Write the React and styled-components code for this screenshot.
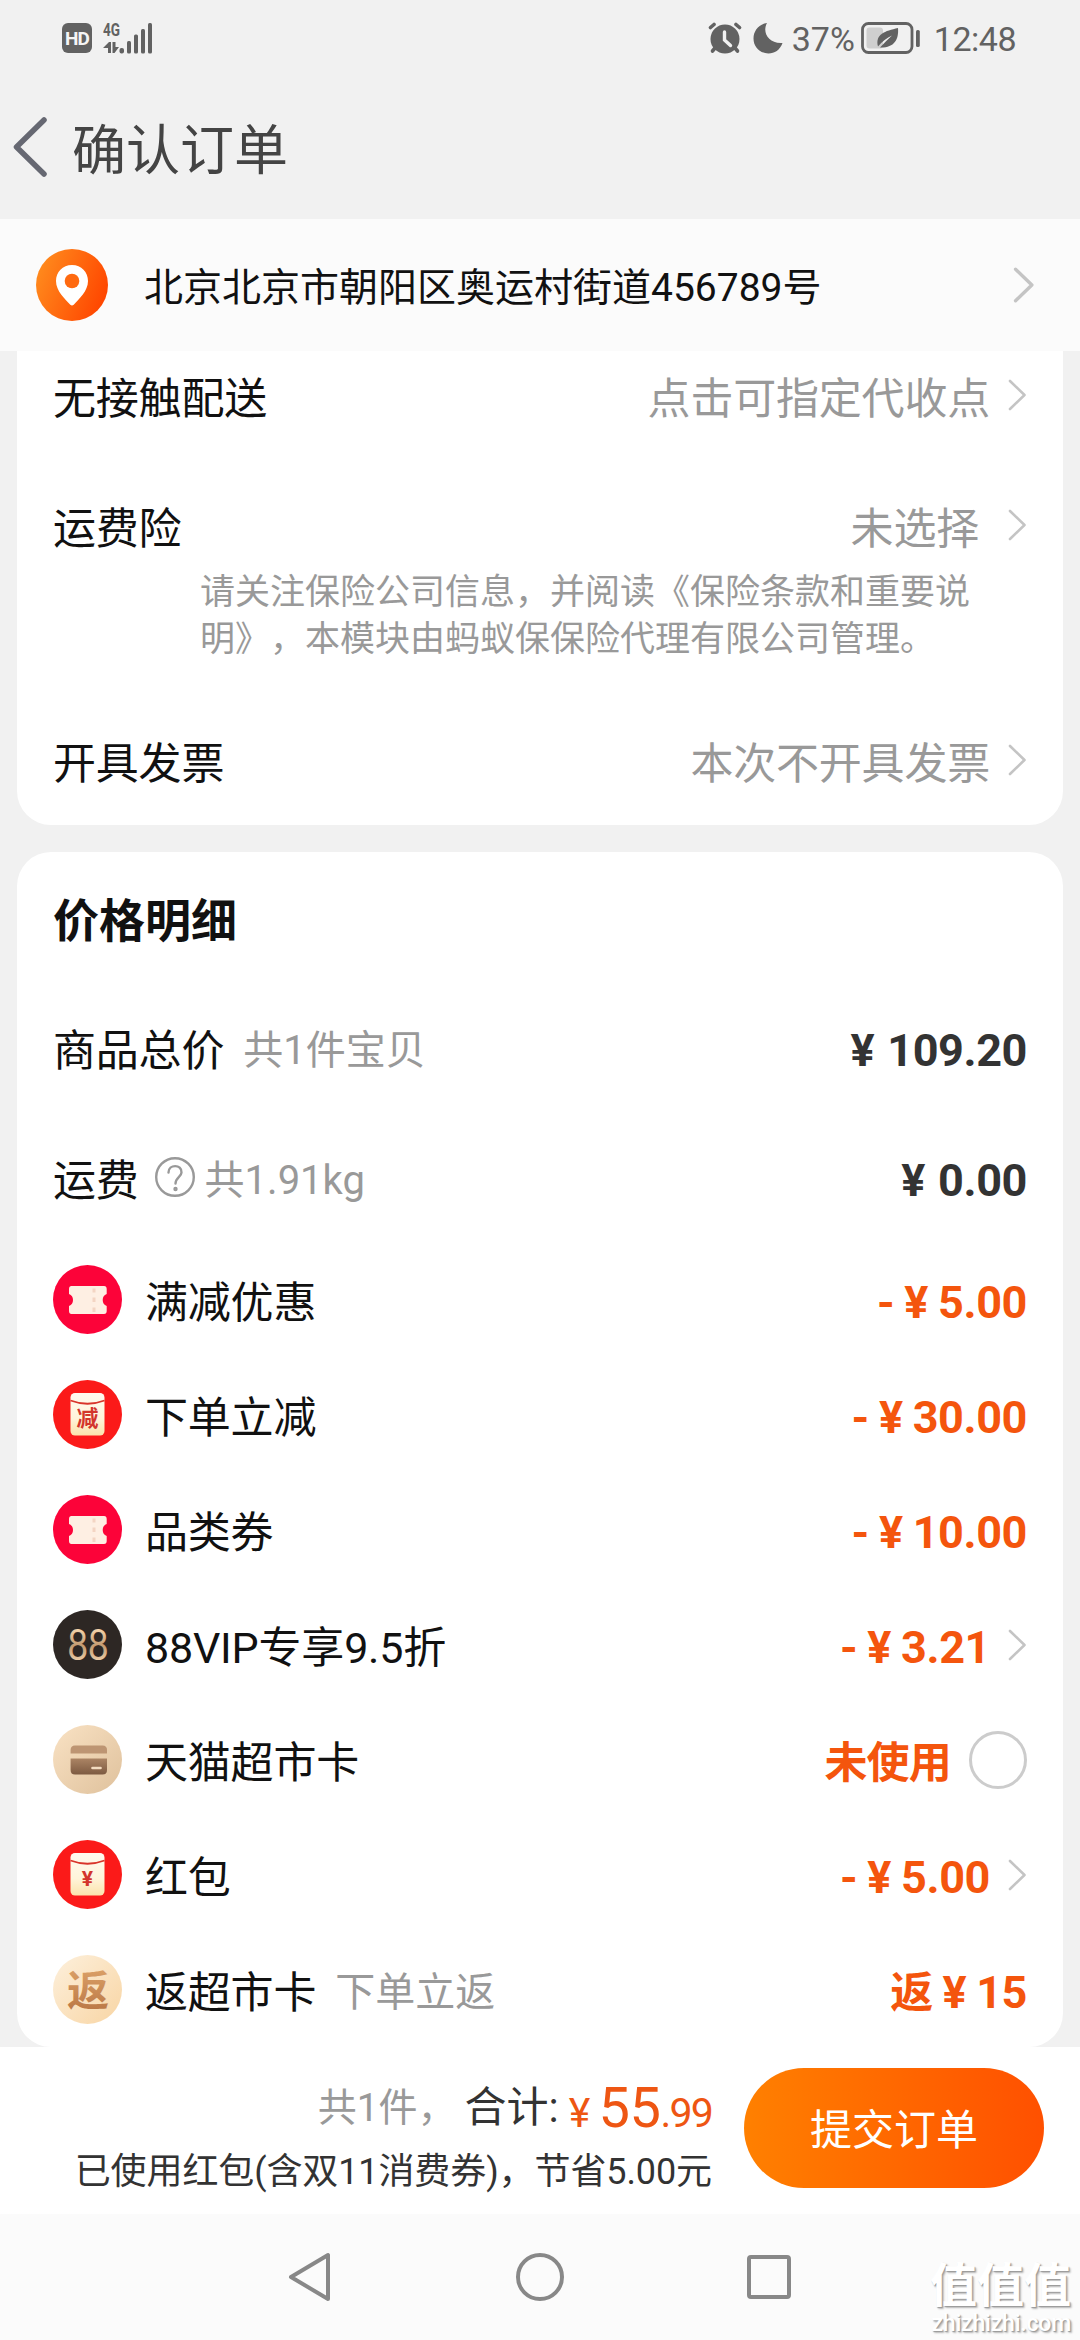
import React from 'react'
import styled, { createGlobalStyle } from 'styled-components'

const discounts = [
	{ icon: 'ticket', name: '满减优惠', amount: '5.00' },
	{ icon: 'minus', name: '下单立减', amount: '30.00' },
	{ icon: 'ticket', name: '品类券', amount: '10.00' },
	{ icon: 'vip', name: '88VIP专享9.5折', amount: '3.21', link: true },
	{ icon: 'card', name: '天猫超市卡', text: '未使用', radio: true },
	{ icon: 'packet', name: '红包', amount: '5.00', link: true },
	{ icon: 'back', name: '返超市卡', hint: '下单立返', prefix: '返', amount: '15' },
]

const Chevron = ({ big }) => (
	<svg width={big ? 22 : 19} height={big ? 36 : 32} viewBox='0 0 19 32'>
		<path
			d='M2 2 L16.5 16 L2 30'
			fill='none'
			stroke='#c4c4c4'
			strokeWidth={big ? 3 : 2.6}
			strokeLinecap='round'
			strokeLinejoin='round'
		/>
	</svg>
)

const Signal = () => (
	<svg width='50' height='44' viewBox='0 -6 50 44' fill='#626262'>
		<text x='0' y='14' fontSize='18' fontWeight='700' textLength='17' lengthAdjust='spacingAndGlyphs'>
			4G
		</text>
		<path d='M0 26 L6 20 H8 V31 H5 V26 Z' />
		<path d='M9.5 20 H12.5 V25 H16 L11.5 31 H9.5 Z' />
		<rect x='16.5' y='26' width='4.5' height='5.5' rx='2' />
		<rect x='24' y='19' width='4' height='12.5' rx='1.5' />
		<rect x='31' y='12.5' width='4' height='19' rx='1.5' />
		<rect x='38' y='7' width='4' height='24.5' rx='1.5' />
		<rect x='45' y='1' width='4' height='30.5' rx='1.5' />
	</svg>
)

const Alarm = () => (
	<svg width='34' height='32' viewBox='0 0 34 32' fill='none' stroke='#626262' strokeLinecap='round'>
		<circle cx='17' cy='17' r='14.5' fill='#626262' stroke='none' />
		<path d='M2.5 5.5 L6 2.5 M31.5 5.5 L28 2.5' strokeWidth='3.6' />
		<path d='M7 26 L4.5 29 M27 26 L29.5 29' strokeWidth='3.6' />
		<path d='M16.5 10 V18 L22.5 23.5' stroke='#f1f1f1' strokeWidth='3.4' />
	</svg>
)

const Moon = () => (
	<svg width='30' height='32' viewBox='0 0 30 32'>
		<path
			d='M14 1 C9 10 15 22 29.5 21 C27 28 21.5 31.5 15.5 31.5 C7 31.5 .5 25 .5 16.5 C.5 8.5 6 2 14 1 Z'
			fill='#626262'
		/>
	</svg>
)

const Battery = () => (
	<svg width='60' height='32' viewBox='0 0 60 32'>
		<rect x='1.5' y='1.5' width='49.5' height='29' rx='6' fill='none' stroke='#626262' strokeWidth='2.8' />
		<rect x='5.5' y='5.5' width='16.5' height='21' rx='3' fill='#cfcfcf' />
		<path
			d='M37 6 C38 18 33 26 19 25.5 C23 21 27 17 31 13.5 C26 16 21 19.5 17 24.5 C14 12 24 9 37 6 Z'
			fill='#626262'
		/>
		<rect x='55' y='8' width='3.8' height='17' rx='1.6' fill='#626262' />
	</svg>
)

const Pin = () => (
	<svg width='72' height='72' viewBox='0 0 72 72'>
		<defs>
			<linearGradient id='pin' x1='0' y1='0.2' x2='1' y2='0.6'>
				<stop offset='0' stopColor='#ff8d1e' />
				<stop offset='1' stopColor='#ff4600' />
			</linearGradient>
		</defs>
		<circle cx='36' cy='36' r='36' fill='url(#pin)' />
		<path
			d='M36 16 C26.5 16 20 23 20 32 C20 42 29 50 34.3 55.8 C35.5 56.8 36.5 56.8 37.7 55.8 C43 50 52 42 52 32 C52 23 45.5 16 36 16 Z'
			fill='#fff'
		/>
		<circle cx='36' cy='32' r='7.3' fill='#ff6a10' />
	</svg>
)

const Ticket = () => (
	<svg width='69' height='69' viewBox='0 0 69 69'>
		<circle cx='34.5' cy='34.5' r='34.5' fill='#fc0339' />
		<path
			d='M18.5 21 H51 Q53.7 21 53.7 24 V29 A6.5 6.5 0 0 0 53.7 41 V46 Q53.7 49 51 49 H18.5 Q16 49 16 46 V41 A6.5 6.5 0 0 0 16 29 V24 Q16 21 18.5 21 Z'
			fill='#feefe3'
		/>
		<path d='M41 23.5 V27.5 M41 32.5 V37 M41 42.5 V47' stroke='#f3d5c4' strokeWidth='3' />
	</svg>
)

const Packet = ({ mark, size }) => (
	<svg width='69' height='69' viewBox='0 0 69 69'>
		<defs>
			<linearGradient id={'packet' + size} x1='0' y1='0' x2='0' y2='1'>
				<stop offset='0' stopColor='#fffaf0' />
				<stop offset='0.6' stopColor='#fff4da' />
				<stop offset='1' stopColor='#fbe3ac' />
			</linearGradient>
		</defs>
		<circle cx='34.5' cy='34.5' r='34.5' fill='#fb1a19' />
		<rect x='17.5' y='13' width='34' height='42.5' rx='4.5' fill={`url(#packet${size})`} />
		<path d='M17.5 20.5 Q34.5 27 51.5 20.5' fill='none' stroke='#d9352b' strokeWidth='1.8' />
		<text x='34.5' y='46' textAnchor='middle' fontSize={size} fontWeight='700' fill='#d3352c'>
			{mark}
		</text>
	</svg>
)

const Vip = () => (
	<svg width='69' height='69' viewBox='0 0 69 69'>
		<defs>
			<linearGradient id='vip' x1='0' y1='0' x2='0' y2='1'>
				<stop offset='0.2' stopColor='#f6d6ae' />
				<stop offset='0.55' stopColor='#c39a70' />
				<stop offset='0.9' stopColor='#f3d6b2' />
			</linearGradient>
		</defs>
		<circle cx='34.5' cy='34.5' r='34.5' fill='#2d2724' />
		<text
			x='14.5'
			y='49.5'
			fontFamily='Lato, sans-serif'
			fontSize='42'
			fill='url(#vip)'
			textLength='41'
			lengthAdjust='spacingAndGlyphs'
		>
			88
		</text>
	</svg>
)

const MarketCard = () => (
	<svg width='69' height='69' viewBox='0 0 69 69'>
		<defs>
			<linearGradient id='cardBg' x1='0' y1='0' x2='1' y2='1'>
				<stop offset='0' stopColor='#f9e2c4' />
				<stop offset='1' stopColor='#dfc19c' />
			</linearGradient>
			<linearGradient id='cardFg' x1='0' y1='0' x2='0' y2='1'>
				<stop offset='0' stopColor='#ab8464' />
				<stop offset='1' stopColor='#7d5a41' />
			</linearGradient>
		</defs>
		<circle cx='34.5' cy='34.5' r='34.5' fill='url(#cardBg)' />
		<path d='M17.6 28.5 V25 Q17.6 20.5 22 20.5 H49.5 Q54 20.5 54 25 V28.5 Z' fill='#bd9573' />
		<path d='M17.6 33.5 H54 V45 Q54 49.5 49.5 49.5 H22 Q17.6 49.5 17.6 45 Z' fill='url(#cardFg)' />
		<path d='M39.5 43 H47.5' stroke='#f3dcc0' strokeWidth='2.6' strokeLinecap='round' />
	</svg>
)

const Back = () => (
	<svg width='69' height='69' viewBox='0 0 69 69'>
		<defs>
			<linearGradient id='backBg' x1='0' y1='0' x2='1' y2='1'>
				<stop offset='0' stopColor='#fdf0dc' />
				<stop offset='1' stopColor='#f8d5a4' />
			</linearGradient>
			<linearGradient id='backFg' x1='0' y1='0' x2='0' y2='1'>
				<stop offset='0' stopColor='#dca269' />
				<stop offset='1' stopColor='#b87442' />
			</linearGradient>
		</defs>
		<circle cx='34.5' cy='34.5' r='34.5' fill='url(#backBg)' />
		<text x='35' y='50.5' textAnchor='middle' fontSize='42' fontWeight='700' fill='url(#backFg)'>
			返
		</text>
	</svg>
)

const icons = {
	ticket: <Ticket />,
	minus: <Packet mark='减' size={22} />,
	vip: <Vip />,
	card: <MarketCard />,
	packet: <Packet mark='¥' size={21} />,
	back: <Back />,
}

const App = () => {
	return (
		<Page lang='zh-CN'>
			<GlobalStyle />
			<StatusBar>
				<div className='group'>
					<HdBadge>HD</HdBadge>
					<Signal />
				</div>
				<div className='group'>
					<Alarm />
					<Moon />
					<span className='percent'>37%</span>
					<Battery />
					<span className='time'>12:48</span>
				</div>
			</StatusBar>
			<TitleBar>
				<svg width='34' height='60' viewBox='0 0 34 60'>
					<path
						d='M31 3 L3.5 30 L31 57'
						fill='none'
						stroke='#666872'
						strokeWidth='5.5'
						strokeLinecap='round'
						strokeLinejoin='round'
					/>
				</svg>
				<h1>确认订单</h1>
			</TitleBar>
			<AddressBar>
				<Pin />
				<p>北京北京市朝阳区奥运村街道456789号</p>
				<Chevron big />
			</AddressBar>

			<OptionsCard>
				<Row>
					<Label>无接触配送</Label>
					<Value>点击可指定代收点</Value>
					<Chevron />
				</Row>
				<Row>
					<Label>运费险</Label>
					<Value $space={29}>未选择</Value>
					<Chevron />
				</Row>
				<Note>
					请关注保险公司信息，并阅读《保险条款和重要说
					<br />
					明》，本模块由蚂蚁保保险代理有限公司管理。
				</Note>
				<Row>
					<Label>开具发票</Label>
					<Value>本次不开具发票</Value>
					<Chevron />
				</Row>
			</OptionsCard>

			<PriceCard>
				<h2>价格明细</h2>
				<Row>
					<Label>商品总价</Label>
					<Hint $space={19}>共1件宝贝</Hint>
					<Price $gap={13}>
						<span>¥</span>
						<span>109.20</span>
					</Price>
				</Row>
				<Row>
					<Label>运费</Label>
					<Help width='40' height='40' viewBox='0 0 40 40'>
						<circle cx='20' cy='20' r='18.8' />
						<path d='M13.5 15.5 C13.5 7 27 7 26.5 15.5 C26.500 19.5 20.5 20.5 20.5 26.5' />
						<circle cx='20.5' cy='32' r='1' />
					</Help>
					<Hint $space={10}>共1.91kg</Hint>
					<Price $gap={13}>
						<span>¥</span>
						<span>0.00</span>
					</Price>
				</Row>
				<div className='discounts'>
					{discounts.map((item) => (
						<DiscountRow key={item.name}>
							{icons[item.icon]}
							<Label>{item.name}</Label>
							{item.hint && <Hint $space={19}>{item.hint}</Hint>}
							<Price $accent $gap={10}>
								{item.text ? (
									<em>{item.text}</em>
								) : (
									<>
										{item.prefix ? <em>{item.prefix}</em> : <span>-</span>}
										<span>¥</span>
										<span>{item.amount}</span>
									</>
								)}
							</Price>
							{item.link && <Chevron />}
							{item.radio && <Radio />}
						</DiscountRow>
					))}
				</div>
			</PriceCard>

			<SubmitBar>
				<Summary>
					<div className='total'>
						<span className='count'>共1件，</span>
						<span className='label'>合计:</span>
						<span className='sum'>
							<small>¥</small>
							<b>55</b>
							<small>.99</small>
						</span>
					</div>
					<p>已使用红包(含双11消费券)，节省5.00元</p>
				</Summary>
				<SubmitButton>提交订单</SubmitButton>
			</SubmitBar>

			<NavBar>
				<svg width='48' height='50' viewBox='0 0 48 50'>
					<path d='M42 3 V47 L5 25 Z' />
				</svg>
				<svg width='50' height='50' viewBox='0 0 50 50'>
					<circle cx='25' cy='25' r='22' />
				</svg>
				<svg width='50' height='50' viewBox='0 0 50 50'>
					<rect x='5' y='5' width='40' height='40' rx='2' />
				</svg>
				<Watermark>
					<strong>值值值</strong>
					<span>zhizhizhi.com</span>
				</Watermark>
			</NavBar>
		</Page>
	)
}

const GlobalStyle = createGlobalStyle`
	* {
		box-sizing: border-box;
		margin: 0;
		padding: 0;
	}
	body {
		font-family: Roboto, 'Noto Sans CJK SC', sans-serif;
		background-color: #f1f1f1;
		color: #111;
		text-spacing-trim: space-all;
	}
	svg {
		flex-shrink: 0;
		display: block;
	}
`

const Page = styled.div`
	width: 1080px;
	height: 2340px;
	display: flex;
	flex-direction: column;
	overflow: hidden;
	background-color: #f1f1f1;
	white-space: nowrap;
`

const StatusBar = styled.div`
	height: 75px;
	padding: 0 64px 0 62px;
	display: flex;
	justify-content: space-between;
	align-items: center;
	font-size: 34px;
	color: #626262;

	.group {
		display: flex;
		align-items: center;
	}
	.group > svg:first-child {
		margin-right: 11px;
	}
	.percent {
		margin: 3px 6px 0 9px;
	}
	.time {
		margin: 3px 0 0 13px;
		letter-spacing: -0.5px;
	}
`

const HdBadge = styled.div`
	width: 30px;
	height: 30px;
	margin-right: 11px;
	border-radius: 6px;
	background-color: #626262;
	color: #f5f5f5;
	font-size: 19px;
	line-height: 31px;
	font-weight: 700;
	text-align: center;
	letter-spacing: -1px;
`

const TitleBar = styled.header`
	height: 144px;
	padding-left: 13px;
	display: flex;
	align-items: center;
	gap: 25px;

	h1 {
		padding-top: 9px;
		font-size: 54px;
		line-height: 70px;
		font-weight: 400;
		color: #444;
	}
`

const AddressBar = styled.div`
	height: 132px;
	padding: 0 45px 0 36px;
	display: flex;
	align-items: center;
	background-color: #fbfbfb;

	p {
		flex: 1;
		margin-left: 36px;
		padding-top: 6px;
		font-size: 39px;
		line-height: 50px;
	}
`

const Card = styled.section`
	margin: 0 17px;
	padding: 0 36px;
	background-color: #fff;
`

const Row = styled.div`
	height: 60px;
	display: flex;
	align-items: center;
`

const OptionsCard = styled(Card)`
	height: 474px;
	padding-top: 14px;
	border-radius: 0 0 34px 34px;

	${Row} + ${Row} {
		margin-top: 70px;
	}
`

const PriceCard = styled(Card)`
	height: 1195px;
	margin-top: 27px;
	padding-top: 39px;
	border-radius: 34px;

	h2 {
		margin-bottom: 66px;
		font-size: 46px;
		line-height: 60px;
		font-weight: 700;
	}
	${Row} + ${Row} {
		margin-top: 70px;
	}
	.discounts {
		margin-top: 35px;
	}
`

const Label = styled.span`
	padding-top: 7px;
	font-size: 43px;
	line-height: 50px;
	letter-spacing: -0.2px;
`

const Value = styled.span`
	margin-left: auto;
	margin-right: ${({ $space }) => $space || 18}px;
	padding-top: 7px;
	font-size: 43px;
	line-height: 50px;
	letter-spacing: -0.2px;
	color: #999;
`

const Hint = styled.span`
	margin-left: ${({ $space }) => $space}px;
	padding-top: 7px;
	font-size: 40px;
	line-height: 50px;
	color: #999;
`

const Note = styled.p`
	margin: 15px 0 67px 147px;
	font-size: 35px;
	line-height: 46.5px;
	color: #999;
`

const Help = styled.svg`
	margin-left: 16px;
	fill: none;
	stroke: #999;
	stroke-width: 2.4;
	stroke-linecap: round;
`

const Price = styled.span`
	margin-left: auto;
	padding-top: 7px;
	display: flex;
	gap: ${({ $gap }) => $gap}px;
	font-size: 45px;
	line-height: 50px;
	font-weight: 700;
	letter-spacing: -0.4px;
	color: ${({ $accent }) => ($accent ? '#f4550d' : '#333')};

	em {
		font-size: 43px;
		font-style: normal;
		letter-spacing: -0.8px;
	}
	& + svg {
		margin-left: 18px;
	}
`

const DiscountRow = styled.div`
	height: 115px;
	display: flex;
	align-items: center;

	${Label} {
		margin-left: 23px;
	}
`

const Radio = styled.span`
	width: 58px;
	height: 58px;
	margin-left: 18px;
	border: 3px solid #ccc;
	border-radius: 50%;
`

const SubmitBar = styled.footer`
	height: 167px;
	padding-right: 36px;
	display: flex;
	justify-content: flex-end;
	align-items: flex-start;
	gap: 32px;
	background-color: #fff;
`

const Summary = styled.div`
	padding-top: 31px;
	display: flex;
	flex-direction: column;
	align-items: flex-end;
	color: #333;

	.total {
		height: 60px;
		display: flex;
		align-items: center;
		line-height: 60px;
	}
	.count {
		font-size: 39px;
		color: #999;
	}
	.label {
		margin-left: 8px;
		font-size: 42px;
	}
	.sum {
		margin-left: 10px;
		font-size: 56px;
		color: #ee5613;
	}
	b {
		margin-left: 10px;
		font-weight: 400;
		letter-spacing: -0.5px;
	}
	small {
		font-size: 41px;
		line-height: 1;
		letter-spacing: -1.8px;
	}
	p {
		margin-top: 11px;
		font-size: 36px;
		line-height: 46px;
		letter-spacing: -0.1px;
	}
`

const SubmitButton = styled.button`
	width: 300px;
	height: 120px;
	margin-top: 21px;
	padding-top: 6px;
	border: none;
	border-radius: 60px;
	background: linear-gradient(90deg, #ff8000, #ff5000);
	color: #fff;
	font-family: inherit;
	font-size: 42px;
	line-height: 50px;
`

const NavBar = styled.nav`
	position: relative;
	height: 126px;
	padding-left: 286px;
	display: flex;
	align-items: center;
	background-color: #fbfbfb;

	svg {
		margin-right: 179px;
		fill: none;
		stroke: #888;
		stroke-width: 4;
		stroke-linejoin: round;
	}
	svg:first-child {
		margin-right: 181px;
	}
`

/* sits over the right end of the navigation bar */
const Watermark = styled.div`
	position: absolute;
	right: 9px;
	bottom: 2px;
	display: flex;
	flex-direction: column;
	align-items: flex-end;
	color: #fff;
	text-shadow: 1px 1px 1px #999, 2px 2px 2px #bbb;

	strong {
		font-size: 47px;
		line-height: 49px;
	}
	span {
		font-size: 23px;
		line-height: 28px;
		font-weight: 500;
		letter-spacing: -0.2px;
	}
`

export default App
